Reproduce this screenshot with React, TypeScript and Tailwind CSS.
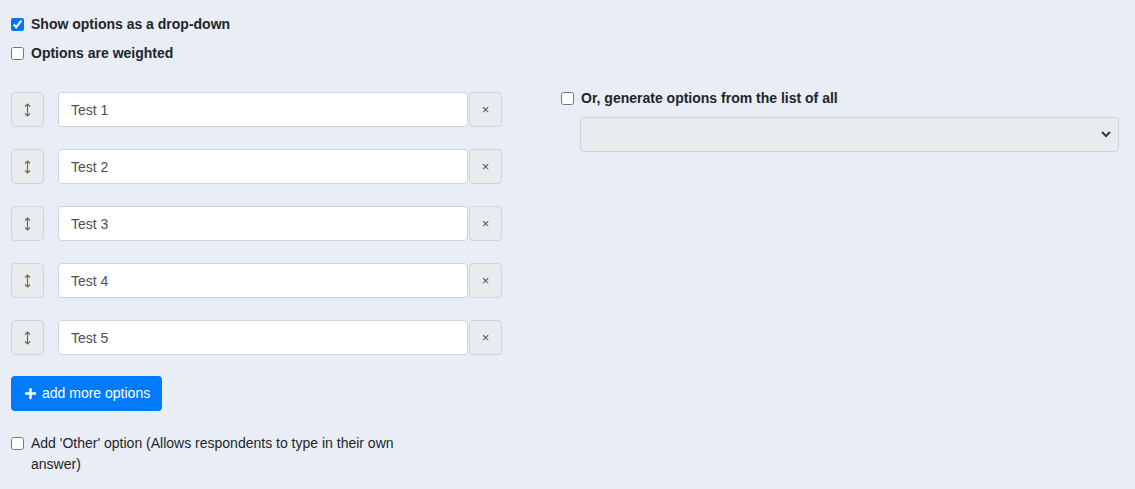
import { Plus } from 'lucide-react';

const options = ['Test 1', 'Test 2', 'Test 3', 'Test 4', 'Test 5'];

function OptionRow({ value }: { value: string }) {
  return (
    <div className="flex items-center h-[35px]">
      {/* drag handle */}
      <button className="w-[33px] h-[35px] flex items-center justify-center bg-[#e9ecef] border border-[#ced4da] rounded">
        <svg width="7" height="14" viewBox="0 0 7 14" fill="none" stroke="#7a6548" strokeWidth="1.2">
          <path d="M3.5 1v12" />
          <path d="M1 3.5l2.5-2.5 2.5 2.5" />
          <path d="M1 10.5l2.5 2.5 2.5-2.5" />
        </svg>
      </button>
      <input
        readOnly
        value={value}
        className="ml-[14px] w-[410px] h-[35px] bg-white border border-[#ced4da] rounded px-3 text-[14px] text-[#495057] outline-none"
      />
      <button className="ml-[1px] w-[33px] h-[35px] flex items-center justify-center bg-[#e9ecef] border border-[#ced4da] rounded text-[#495057] text-[13px] leading-none">
        ×
      </button>
    </div>
  );
}

export default function App() {
  return (
    <div className="min-h-[489px] w-full bg-[#e9edf5] font-['Liberation_Sans',Arial,sans-serif] text-[14px] text-[#212529]">
      <div className="pl-[11px] pt-[14px] flex flex-col gap-[8px]">
        <label className="flex items-center gap-[7px] font-bold">
          <input type="checkbox" defaultChecked className="w-[13px] h-[13px] accent-[#0075ff]" />
          Show options as a drop-down
        </label>
        <label className="flex items-center gap-[7px] font-bold">
          <input type="checkbox" className="w-[13px] h-[13px]" />
          Options are weighted
        </label>
      </div>

      <div className="flex mt-[28px]">
        {/* Left column */}
        <div className="pl-[11px] w-[550px]">
          <div className="flex flex-col gap-[22px]">
            {options.map((o) => (
              <OptionRow key={o} value={o} />
            ))}
          </div>

          <button className="mt-[21px] h-[35px] px-[12px] flex items-center gap-[4px] bg-[#007bff] text-white rounded text-[14px]">
            <Plus size={15} strokeWidth={4} />
            add more options
          </button>

          <label className="mt-[22px] flex items-start gap-[7px] w-[400px] leading-[21px]">
            <input type="checkbox" className="w-[13px] h-[13px] mt-[4px] shrink-0" />
            <span>Add 'Other' option (Allows respondents to type in their own answer)</span>
          </label>
        </div>

        {/* Right column */}
        <div className="pl-[11px] pr-[16px] flex-1">
          <label className="flex items-center gap-[7px] font-bold mt-[-4px]">
            <input type="checkbox" className="w-[13px] h-[13px]" />
            Or, generate options from the list of all
          </label>
          <div className="mt-[8px] ml-[19px] relative">
            <select
              disabled
              className="w-full h-[35px] appearance-none bg-[#e9ecef] border border-[#ced4da] rounded px-3"
            />
            <svg
              className="absolute right-[8px] top-[13px]"
              width="10"
              height="8"
              viewBox="0 0 10 8"
              fill="none"
              stroke="#343a40"
              strokeWidth="2"
            >
              <path d="M1 2l4 4 4-4" />
            </svg>
          </div>
        </div>
      </div>
    </div>
  );
}
